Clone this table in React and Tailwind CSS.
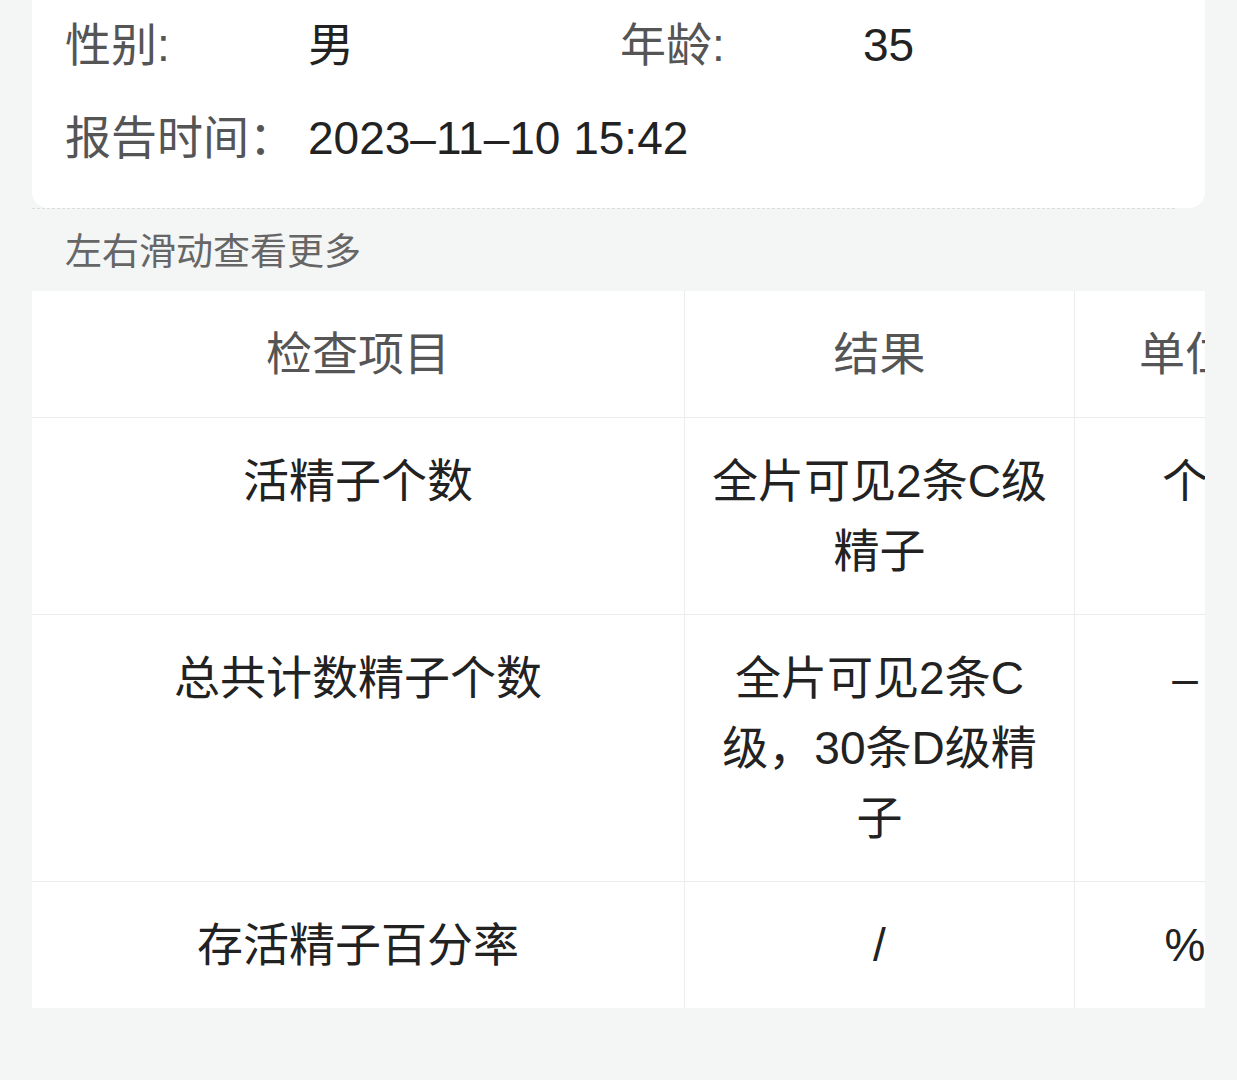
import React from "react";

const rows = [
  { name: "活精子个数", result: "全片可见2条C级精子", unit: "个" },
  { name: "总共计数精子个数", result: "全片可见2条C级，30条D级精子", unit: "–" },
  { name: "存活精子百分率", result: "/", unit: "%" },
];

export default function App() {
  return (
    <div
      className="min-h-[1080px] w-[1237px] bg-[#f4f5f5] px-[32px]"
      style={{ fontFamily: '"Liberation Sans", "Noto Sans CJK SC", sans-serif' }}
    >
      <div className="rounded-b-[16px] bg-white pl-[33px] pt-[10px] pb-[35px]">
        <div className="grid grid-cols-[243px_312px_243px_1fr] text-[46px] leading-[70px]">
          <div className="text-[#555]">性别:</div>
          <div className="text-[#222]">男</div>
          <div className="text-[#555]">年龄:</div>
          <div className="text-[#222]">35</div>
        </div>
        <div className="mt-[23px] grid grid-cols-[243px_1fr] text-[46px] leading-[70px]">
          <div className="text-[#555]">报告时间：</div>
          <div className="text-[#222]">2023–11–10 15:42</div>
        </div>
      </div>
      <div className="mr-[30px] border-t border-dashed border-[#dcdcdc]" />
      <div className="pl-[33px] pt-[20px] pb-[14px] text-[37px] leading-[48px] text-[#666]">
        左右滑动查看更多
      </div>
      <div className="w-[1173px] overflow-hidden bg-white">
        <div className="grid w-[1263px] grid-cols-[653px_390px_220px]">
          <div className="border-b border-r border-[#ececec] px-[24px] py-[28px] text-center text-[46px] leading-[70px] text-[#555]">
            检查项目
          </div>
          <div className="border-b border-r border-[#ececec] px-[24px] py-[28px] text-center text-[46px] leading-[70px] text-[#555]">
            结果
          </div>
          <div className="border-b border-[#ececec] px-[24px] py-[28px] text-center text-[46px] leading-[70px] text-[#555]">
            单位
          </div>
          {rows.map((r, i) => (
            <React.Fragment key={i}>
              <div
                className={
                  "border-r border-[#ececec] px-[24px] py-[28px] text-center text-[46px] leading-[70px] text-[#222] " +
                  (i < rows.length - 1 ? "border-b" : "")
                }
              >
                {r.name}
              </div>
              <div
                className={
                  "border-r border-[#ececec] px-[24px] py-[28px] text-center text-[46px] leading-[70px] text-[#222] " +
                  (i < rows.length - 1 ? "border-b" : "")
                }
              >
                {r.result}
              </div>
              <div
                className={
                  "border-[#ececec] px-[24px] py-[28px] text-center text-[46px] leading-[70px] text-[#222] " +
                  (i < rows.length - 1 ? "border-b" : "")
                }
              >
                {r.unit}
              </div>
            </React.Fragment>
          ))}
        </div>
      </div>
    </div>
  );
}
